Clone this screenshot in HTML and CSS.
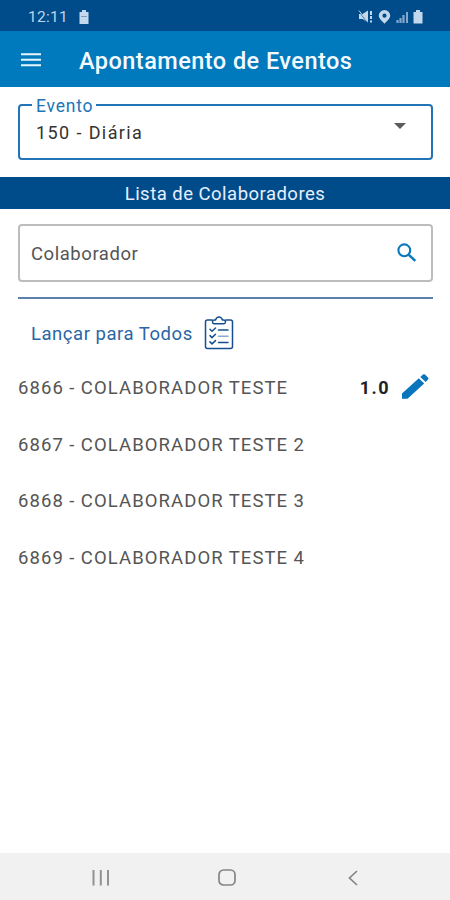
FILE: index.html
```html
<!DOCTYPE html>
<html lang="pt-BR">
<head>
<meta charset="utf-8">
<title>Apontamento de Eventos</title>
<link rel="stylesheet" href="styles.css">
</head>
<body>
<div class="status">
  <span class="clock">12:11</span>
  <svg class="status-battery" width="12" height="16" viewBox="0 0 12 16"><path fill="#c3d8ec" d="M4 1h4v2h2.500v12h-9V3H4z"/><path stroke="#7a9fc4" d="M3 7.500h6"/></svg>
  <svg class="status-icons" width="68" height="16" viewBox="0 0 68 16">
    <g fill="#c3d8ec">
      <path d="M1 5h3.500L10 1.500v12L4.500 10H1z"/>
      <path d="M12 2h2v4h-2zM12 7h2v3h-2zM12 11.500h2v2h-2z"/>
      <path fill-rule="evenodd" d="M26.500 1a5.700 5.700 0 0 1 5.700 5.700c0 2.500-2.700 4.800-5.700 8-3-3.200-5.700-5.500-5.700-8a5.700 5.700 0 0 1 5.700-5.700zm0 3.600a2.100 2.100 0 1 0 0 4.200 2.100 2.100 0 0 0 0-4.200z"/>
      <path d="M58 1h4v2h2.500v11.500h-9V3H58z"/>
    </g>
    <path d="M1 2l8 11" stroke="#004c8a" stroke-width="1.200"/>
    <path d="M1 1.500l8 11" stroke="#c3d8ec" stroke-width="1"/>
    <path d="M39.500 11v3M42.500 9v5M45.500 6v8" stroke="#82a9cd" stroke-width="2.200"/>
    <path d="M49 3v11" stroke="#82a9cd" stroke-width="2"/>
  </svg>
</div>
<header class="appbar">
  <svg width="20" height="14" viewBox="0 0 20 14"><path d="M0 1.200h20M0 6.700h20M0 12.200h20" stroke="#e8f6ff" stroke-width="1.900"/></svg>
  <h1>Apontamento de Eventos</h1>
</header>
<main>
  <fieldset class="event">
    <legend><span>Evento</span></legend>
    <div class="event-row"><span>150 - Diária</span>
    <svg width="12" height="6" viewBox="0 0 12 6"><path d="M0 0h12L6 6z" fill="#5c5c5c"/></svg></div>
  </fieldset>
  <h2><span>Lista de Colaboradores</span></h2>
  <div class="search">
    <span>Colaborador</span>
    <svg width="20" height="20" viewBox="0 0 20 20" fill="none" stroke="#0878be"><circle cx="7.300" cy="7.300" r="5.900" stroke-width="2.100"/><path d="M11.800 11.800l6.500 6" stroke-width="2.400"/></svg>
  </div>
  <div class="all">
    <span>Lançar para Todos</span>
    <svg width="30" height="34" viewBox="0 0 30 34" fill="none" stroke="#164f91" stroke-width="1.500" stroke-linejoin="round" stroke-linecap="round">
      <path d="M8 4H3.500Q1.500 4 1.500 6v24.500q0 2 2 2h23q2 0 2-2V6q0-2-2-2H22"/>
      <path d="M10 7.800Q8.500 7.500 8.500 5.700T10.500 4h1Q12.500 1 15 1t3.500 3h1q2 0 2 1.700T20 7.800z"/>
      <path d="M6 13.300l2 2 3.500-3.300M6 19.600l2 2 3.500-3.300M6 25.900l2 2 3.500-3.300M14.500 14H24M14.500 26.500H24"/>
      <path d="M14.500 20.300H24" stroke="#8ba9cb"/>
    </svg>
  </div>
  <ul>
    <li><span class="name">6866 - COLABORADOR TESTE</span><b>1.0</b>
      <svg width="28" height="26" viewBox="0 0 28 26" fill="#0875bd"><path d="M1 19.500L17.800 4.300l5.400 5.100L6.500 24.800H1z"/><path d="M19.300 3L22 .6q1-.8 2 0l3 2.900q.9 1 0 1.900L24.700 8z"/></svg></li>
    <li><span class="name">6867 - COLABORADOR TESTE 2</span></li>
    <li><span class="name">6868 - COLABORADOR TESTE 3</span></li>
    <li><span class="name">6869 - COLABORADOR TESTE 4</span></li>
  </ul>
</main>
<nav>
  <svg width="18" height="16" viewBox="0 0 18 16"><path d="M1.500 0v15.500M8.800 0v15.500M16 0v15.500" stroke="#929292" stroke-width="2"/></svg>
  <svg class="home" width="18" height="17" viewBox="0 0 18 17"><rect x="1" y="1" width="16" height="15" rx="4.500" fill="none" stroke="#858585" stroke-width="1.700"/></svg>
  <svg width="10" height="16" viewBox="0 0 10 16"><path d="M9 1L1.500 8 9 15" fill="none" stroke="#858585" stroke-width="1.700"/></svg>
</nav>
</body>
</html>
```
FILE: styles.css
```css
* { box-sizing: border-box; }
body { margin: 0; width: 450px; height: 900px; display: flex; flex-direction: column; background: #fff; font-family: Roboto, sans-serif; color: #555; overflow: hidden; }
svg { display: block; flex: none; }
h1, h2, ul { margin: 0; padding: 0; }
.status { height: 31px; flex: none; background: #004c8a; display: flex; align-items: center; padding: 2px 24px 0 28px; }
.clock { font-size: 15.500px; letter-spacing: 0.300px; color: #bdd5eb; width: 50px; }
.status-icons { margin-left: auto; }
.appbar { height: 56px; flex: none; background: #0079bd; display: flex; align-items: center; padding: 2px 0 0 21px; gap: 38px; }
.appbar h1 { font-size: 23.500px; font-weight: 500; color: #f4fbff; white-space: nowrap; letter-spacing: 0.460px; padding-top: 2px; }
main { flex: 1; }
.event { margin: 7px 17px 0 18px; height: 66px; border: 2px solid #2374b7; border-radius: 4px; padding: 0 25px 0 16px; }
.event legend { height: 22px; font-size: 17.500px; letter-spacing: 0.800px; color: #2275b8; padding: 0 3px 0 4px; margin-left: -4px; }
.event legend span { display: block; line-height: 25px; }
.event-row { display: flex; justify-content: space-between; align-items: center; height: 32px; font-size: 18px; letter-spacing: 1.400px; color: #333; }
.event-row svg { margin-top: -12px; }
h2 { height: 32px; margin-top: 17px; background: #004c8a; color: #e6efff; font-size: 18.500px; font-weight: 400; line-height: 34px; letter-spacing: 0.480px; text-align: center; }
.search { height: 58px; margin: 15px 17px 0 18px; border: 2px solid #bdbdbd; border-radius: 4px; display: flex; align-items: center; justify-content: space-between; padding: 0 14px 0 11px; font-size: 18.500px; letter-spacing: 0.55px; }
.search span { padding-top: 1px; }
.all { margin: 15px 17px 0 18px; border-top: 2px solid #5d7fae; padding: 17px 0 0 13px; height: 61px; display: flex; gap: 11px; color: #2966a5; font-size: 18.500px; letter-spacing: 0.530px; }
.all span { line-height: 36px; }
ul { list-style: none; }
li { height: 56.600px; padding: 2px 21px 0 18px; display: flex; align-items: center; }
.name { font-size: 18.500px; letter-spacing: 1.080px; word-spacing: -0.3px; margin-right: auto; padding-top: 1.500px; white-space: nowrap; }
li b { color: #222; font-weight: 700; font-size: 18px; letter-spacing: 1.500px; margin-right: 11px; padding-top: 1px; }
nav { height: 47px; flex: none; background: #f1f1f1; display: flex; align-items: center; justify-content: space-between; padding: 2px 92px 0; }
.home { margin-right: 5px; }
```
